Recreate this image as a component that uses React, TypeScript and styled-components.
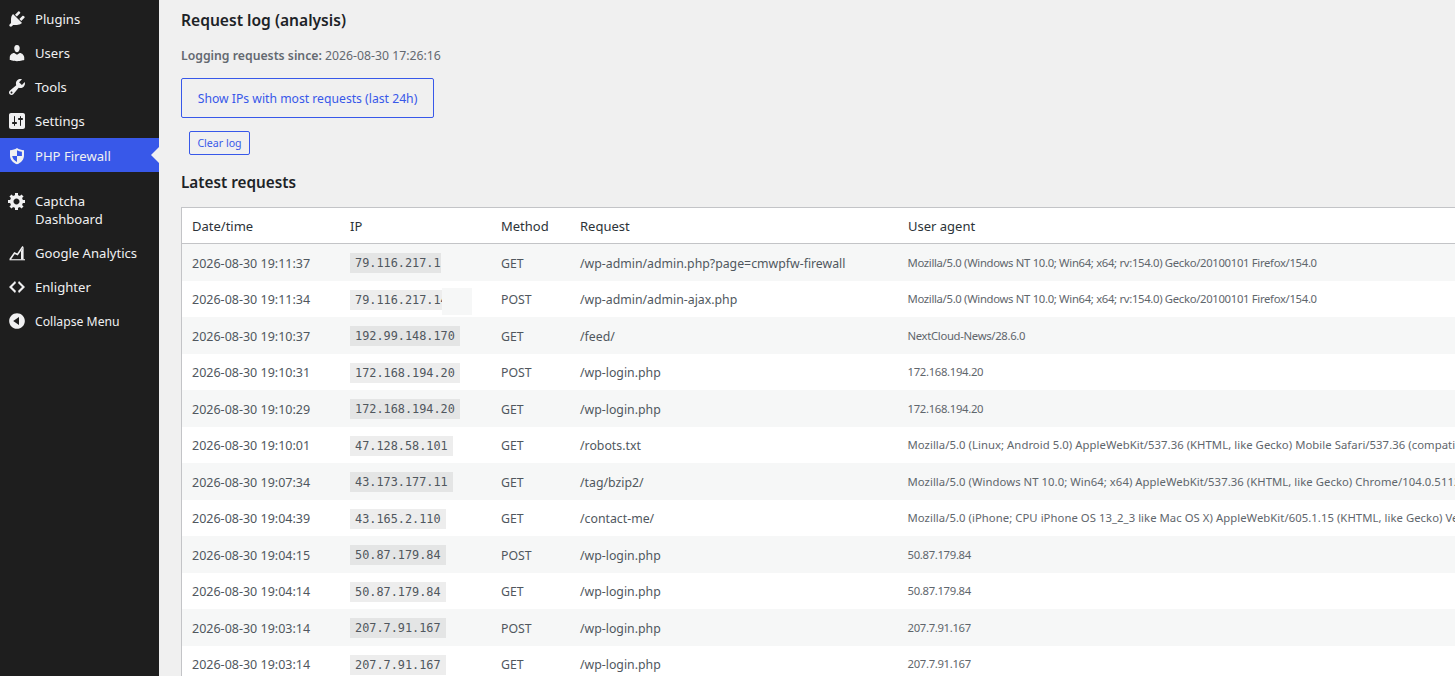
import React from 'react';
import styled, { createGlobalStyle } from 'styled-components';

const GlobalStyle = createGlobalStyle`
  html, body {
    margin: 0;
    padding: 0;
    height: 676px;
    overflow: hidden;
    background: #f0f0f0;
  }
  body {
    font-family: "Noto Sans", "Open Sans", "Liberation Sans", sans-serif;
    font-size: 13px;
    color: #3c434a;
  }
`;

const Shell = styled.div`
  display: flex;
  width: 1455px;
  height: 676px;
  overflow: hidden;
`;

const Sidebar = styled.nav`
  flex: 0 0 159px;
  background: #1e1e1e;
  height: 676px;
  padding-top: 2px;
  box-sizing: border-box;
`;

const Separator = styled.div`
  height: 12px;
`;

const MenuItem = styled.a<{ $active?: boolean }>`
  position: relative;
  display: flex;
  align-items: flex-start;
  gap: 8px;
  padding: ${(p) => (p.$active ? '9px 8px 7px 7px' : '8px 8px 8px 7px')};
  min-height: 18px;
  line-height: 18px;
  font-size: 13.1px;
  color: #f0f0f1;
  background: ${(p) => (p.$active ? '#3858e9' : 'transparent')};
  ${(p) =>
    p.$active &&
    `
    &::after {
      content: '';
      position: absolute;
      right: 0;
      top: 50%;
      margin-top: -8px;
      border: 8px solid transparent;
      border-right-color: #f0f0f1;
      border-left-width: 0;
    }
  `}
`;

const MenuLabel = styled.span<{ $narrow?: boolean }>`
  font-size: ${(p) => (p.$narrow ? '12.2px' : 'inherit')};
  margin-top: ${(p) => (p.$narrow ? '1px' : '0')};
`;

const IconSlot = styled.span`
  flex: 0 0 20px;
  width: 20px;
  height: 20px;
  margin: -1px 0;
  display: block;

  svg {
    display: block;
    width: 20px;
    height: 20px;
    fill: #f0f0f1;
  }
`;

const Main = styled.main`
  flex: 1;
  min-width: 0;
  padding: 0 0 0 22px;
  overflow: hidden;
`;

const Title = styled.h2`
  margin: 10px 0 0;
  font-size: 15.6px;
  line-height: 21px;
  font-weight: 600;
  color: #1d2327;
`;

const Since = styled.p`
  margin: 16px 0 0;
  font-size: 12.25px;
  line-height: 18px;
  color: #646970;

  strong {
    font-weight: 600;
  }
`;

const BigButton = styled.button`
  display: block;
  margin: 13px 0 0;
  width: 253px;
  height: 40px;
  padding: 0;
  border: 1px solid #3858e9;
  border-radius: 2px;
  background: transparent;
  color: #3858e9;
  font: inherit;
  font-size: 12.2px;
`;

const SmallButton = styled.button`
  display: block;
  margin: 13px 0 0 8px;
  width: 61px;
  height: 24px;
  padding: 0;
  border: 1px solid #3858e9;
  border-radius: 2px;
  background: transparent;
  color: #3858e9;
  font: inherit;
  font-size: 10.6px;
`;

const SubTitle = styled.h3`
  margin: 17px 0 0;
  font-size: 15.3px;
  line-height: 21px;
  font-weight: 600;
  color: #1d2327;
`;

const Table = styled.table`
  margin-top: 14px;
  width: 1400px;
  border-collapse: separate;
  border-spacing: 0;
  table-layout: fixed;
  background: #fff;
  border: 1px solid #c3c4c7;
  border-right: 0;
`;

const HeadCell = styled.th`
  height: 35px;
  padding: 0 10px;
  border-bottom: 1px solid #c3c4c7;
  font-size: 13px;
  font-weight: 400;
  text-align: left;
  color: #2c3338;
  white-space: nowrap;
`;

const Row = styled.tr<{ $odd: boolean }>`
  background: ${(p) => (p.$odd ? '#f6f7f7' : '#fff')};
`;

const Cell = styled.td`
  height: 36.5px;
  padding: 2px 10px 0;
  box-sizing: border-box;
  font-size: 12.3px;
  color: #50575e;
  white-space: nowrap;
  overflow: hidden;
`;

const TimeCell = styled(Cell)`
  font-size: 12.5px;
`;

const AgentCell = styled(Cell)<{ $wide?: boolean }>`
  padding: 0 0 0 9.5px;
  font-size: 11.3px;
  letter-spacing: ${(p) => (p.$wide ? '0.05px' : '-0.32px')};
  color: #5f666c;
`;

const IpWrap = styled.span`
  position: relative;
  display: inline-block;
  vertical-align: middle;
`;

const Code = styled.code<{ $clip?: number }>`
  display: block;
  width: ${(p) => (p.$clip ? `${p.$clip}px` : 'auto')};
  overflow: hidden;
  padding: 0 5px;
  box-sizing: ${(p) => (p.$clip ? 'border-box' : 'content-box')};
  background: rgba(0, 0, 0, 0.07);
  font-family: "DejaVu Sans Mono", "Liberation Mono", monospace;
  font-size: 11.85px;
  line-height: 20px;
  white-space: nowrap;
  color: #50575e;
`;

const Cover = styled.span`
  position: absolute;
  left: 100%;
  top: -2px;
  width: 30px;
  height: 27px;
  background: #f6f7f7;
`;

const icons = {
  plugins: 'M13.11 4.36L9.87 7.6 8 5.73l3.24-3.24c.35-.34 1.05-.2 1.56.32.52.51.66 1.21.31 1.55zm-8 1.77l.91-1.12 9.01 9.01-1.19.84c-.71.71-2.63 1.16-3.82 1.16H6.14L4.9 17.26c-.59.59-1.54.59-2.12 0-.59-.58-.59-1.53 0-2.12l1.24-1.24v-3.88c0-1.13.4-3.19 1.09-3.89zm7.26 3.97l3.24-3.24c.34-.35 1.04-.21 1.55.31.52.51.66 1.21.31 1.55l-3.24 3.25z',
  users: 'M10 9.25c-2.27 0-2.73-3.44-2.73-3.44C7 4.02 7.82 2 9.97 2c2.16 0 2.98 2.02 2.71 3.81 0 0-.41 3.44-2.68 3.44zm0 2.57L12.72 10c2.39 0 4.52 2.33 4.52 4.53v2.49s-3.65 1.13-7.24 1.13c-3.65 0-7.24-1.13-7.24-1.13v-2.49c0-2.25 1.94-4.48 4.47-4.48z',
  tools: 'M16.68 9.77c-1.34 1.34-3.3 1.67-4.95.99l-5.41 6.52c-.99.99-2.59.99-3.58 0s-.99-2.59 0-3.57l6.52-5.42c-.68-1.65-.35-3.61.99-4.95 1.28-1.28 3.12-1.62 4.72-1.06l-2.89 2.89 2.82 2.82 2.86-2.87c.53 1.58.18 3.39-1.08 4.65zM3.81 16.21c.4.39 1.04.39 1.43 0 .4-.4.4-1.04 0-1.43-.39-.4-1.03-.4-1.43 0-.39.39-.39 1.03 0 1.43z',
  settings: 'M18 16V4c0-1.1-.9-2-2-2H4c-1.1 0-2 .9-2 2v12c0 1.1.9 2 2 2h12c1.1 0 2-.9 2-2zM8 11h1c.55 0 1 .45 1 1s-.45 1-1 1H8v1.5c0 .28-.22.5-.5.5s-.5-.22-.5-.5V13H6c-.55 0-1-.45-1-1s.45-1 1-1h1V5.5c0-.28.22-.5.5-.5s.5.22.5.5V11zm5-2h-1c-.55 0-1-.45-1-1s.45-1 1-1h1V5.5c0-.28.22-.5.5-.5s.5.22.5.5V7h1c.55 0 1 .45 1 1s-.45 1-1 1h-1v5.5c0 .28-.22.5-.5.5s-.5-.22-.5-.5V9z',
  gear: 'M18 12h-2.18c-.17.7-.44 1.35-.81 1.93l1.54 1.54-2.1 2.1-1.54-1.54c-.58.36-1.23.63-1.91.79V19H8v-2.18c-.68-.16-1.33-.43-1.91-.79l-1.54 1.54-2.12-2.12 1.54-1.54c-.36-.58-.63-1.23-.79-1.91H1V9.03h2.17c.16-.7.44-1.35.8-1.94L2.43 5.55l2.1-2.1 1.54 1.54c.58-.37 1.24-.64 1.93-.81V2h3v2.18c.68.16 1.33.43 1.91.79l1.54-1.54 2.12 2.12-1.54 1.54c.36.59.64 1.24.8 1.94H18V12zm-8.5 1.5c1.66 0 3-1.34 3-3s-1.34-3-3-3-3 1.34-3 3 1.34 3 3 3z',
  code: 'M9 6l-4 4 4 4-1 2-6-6 6-6zm2 8l4-4-4-4 1-2 6 6-6 6z',
  collapse: 'M10 2.16c4.33 0 7.84 3.51 7.84 7.84s-3.51 7.84-7.84 7.84S2.16 14.33 2.16 10 5.71 2.16 10 2.16zm2 11.72V6.12L6.18 9.97z',
};

const Icon = ({ d }: { d: string }) => (
  <IconSlot>
    <svg viewBox="0 0 20 20">
      <path d={d} />
    </svg>
  </IconSlot>
);

const ShieldIcon = () => (
  <IconSlot>
    <svg viewBox="0 0 20 20">
      <path d="M10 2c2 1.3 4.4 2.1 7 2.2v5.2c0 4-2.8 7.2-7 8.9-4.2-1.7-7-4.9-7-8.9V4.2C5.6 4.1 8 3.3 10 2z" />
      <path d="M10 10V4.3c1.4.8 3 1.3 4.9 1.5V10zM10 10v5.9C7.3 14.7 5.5 12.6 5.2 10z" fill="#3858e9" />
    </svg>
  </IconSlot>
);

const AnalyticsIcon = () => (
  <IconSlot>
    <svg viewBox="0 0 20 20">
      <path d="M2.5 16.2H18v1.1H2.5z" />
      <path d="M3 16.5l4.5-6.5 3 1.5 5.5-8" fill="none" stroke="#f0f0f1" strokeWidth="1.6" />
      <path d="M14 8l2.6-4v12.4H14z" />
    </svg>
  </IconSlot>
);

const menu = [
  { label: 'Plugins', icon: <Icon d={icons.plugins} /> },
  { label: 'Users', icon: <Icon d={icons.users} /> },
  { label: 'Tools', icon: <Icon d={icons.tools} /> },
  { label: 'Settings', icon: <Icon d={icons.settings} /> },
];

const FF = 'Mozilla/5.0 (Windows NT 10.0; Win64; x64; rv:154.0) Gecko/20100101 Firefox/154.0';

const rows: { time: string; ip: string; clip?: number; cover?: boolean; method: string; request: string; agent: string; wide?: boolean }[] = [
  { time: '2026-08-30 19:11:37', ip: '79.116.217.1', clip: 91, method: 'GET', request: '/wp-admin/admin.php?page=cmwpfw-firewall', agent: FF },
  { time: '2026-08-30 19:11:34', ip: '79.116.217.14', clip: 92, cover: true, method: 'POST', request: '/wp-admin/admin-ajax.php', agent: FF },
  { time: '2026-08-30 19:10:37', ip: '192.99.148.170', method: 'GET', request: '/feed/', agent: 'NextCloud-News/28.6.0' },
  { time: '2026-08-30 19:10:31', ip: '172.168.194.20', method: 'POST', request: '/wp-login.php', agent: '172.168.194.20' },
  { time: '2026-08-30 19:10:29', ip: '172.168.194.20', method: 'GET', request: '/wp-login.php', agent: '172.168.194.20' },
  { time: '2026-08-30 19:10:01', ip: '47.128.58.101', method: 'GET', request: '/robots.txt', wide: true, agent: 'Mozilla/5.0 (Linux; Android 5.0) AppleWebKit/537.36 (KHTML, like Gecko) Mobile Safari/537.36 (compatible; Bytespider)' },
  { time: '2026-08-30 19:07:34', ip: '43.173.177.11', method: 'GET', request: '/tag/bzip2/', wide: true, agent: 'Mozilla/5.0 (Windows NT 10.0; Win64; x64) AppleWebKit/537.36 (KHTML, like Gecko) Chrome/104.0.5112.81 Safari/537.36' },
  { time: '2026-08-30 19:04:39', ip: '43.165.2.110', method: 'GET', request: '/contact-me/', wide: true, agent: 'Mozilla/5.0 (iPhone; CPU iPhone OS 13_2_3 like Mac OS X) AppleWebKit/605.1.15 (KHTML, like Gecko) Version/13.0.3 Mobile' },
  { time: '2026-08-30 19:04:15', ip: '50.87.179.84', method: 'POST', request: '/wp-login.php', agent: '50.87.179.84' },
  { time: '2026-08-30 19:04:14', ip: '50.87.179.84', method: 'GET', request: '/wp-login.php', agent: '50.87.179.84' },
  { time: '2026-08-30 19:03:14', ip: '207.7.91.167', method: 'POST', request: '/wp-login.php', agent: '207.7.91.167' },
  { time: '2026-08-30 19:03:14', ip: '207.7.91.167', method: 'GET', request: '/wp-login.php', agent: '207.7.91.167' },
];

export default function App() {
  return (
    <Shell>
      <GlobalStyle />
      <Sidebar>
        {menu.map((m) => (
          <MenuItem key={m.label}>
            {m.icon}
            <MenuLabel>{m.label}</MenuLabel>
          </MenuItem>
        ))}
        <MenuItem $active>
          <ShieldIcon />
          <MenuLabel>PHP Firewall</MenuLabel>
        </MenuItem>
        <Separator />
        <MenuItem>
          <Icon d={icons.gear} />
          <MenuLabel>
            Captcha
            <br />
            Dashboard
          </MenuLabel>
        </MenuItem>
        <MenuItem>
          <AnalyticsIcon />
          <MenuLabel>Google Analytics</MenuLabel>
        </MenuItem>
        <MenuItem>
          <Icon d={icons.code} />
          <MenuLabel>Enlighter</MenuLabel>
        </MenuItem>
        <MenuItem>
          <Icon d={icons.collapse} />
          <MenuLabel $narrow>Collapse Menu</MenuLabel>
        </MenuItem>
      </Sidebar>
      <Main>
        <Title>Request log (analysis)</Title>
        <Since>
          <strong>Logging requests since:</strong> 2026-08-30 17:26:16
        </Since>
        <BigButton>Show IPs with most requests (last 24h)</BigButton>
        <SmallButton>Clear log</SmallButton>
        <SubTitle>Latest requests</SubTitle>
        <Table>
          <colgroup>
            <col style={{ width: 158 }} />
            <col style={{ width: 151 }} />
            <col style={{ width: 79 }} />
            <col style={{ width: 328 }} />
            <col />
          </colgroup>
          <thead>
            <tr>
              <HeadCell>Date/time</HeadCell>
              <HeadCell>IP</HeadCell>
              <HeadCell>Method</HeadCell>
              <HeadCell>Request</HeadCell>
              <HeadCell>User agent</HeadCell>
            </tr>
          </thead>
          <tbody>
            {rows.map((r, i) => (
              <Row key={i} $odd={i % 2 === 0}>
                <TimeCell>{r.time}</TimeCell>
                <Cell>
                  <IpWrap>
                    <Code $clip={r.clip}>{r.ip}</Code>
                    {r.cover && <Cover />}
                  </IpWrap>
                </Cell>
                <Cell>{r.method}</Cell>
                <Cell>{r.request}</Cell>
                <AgentCell $wide={r.wide}>{r.agent}</AgentCell>
              </Row>
            ))}
          </tbody>
        </Table>
      </Main>
    </Shell>
  );
}
